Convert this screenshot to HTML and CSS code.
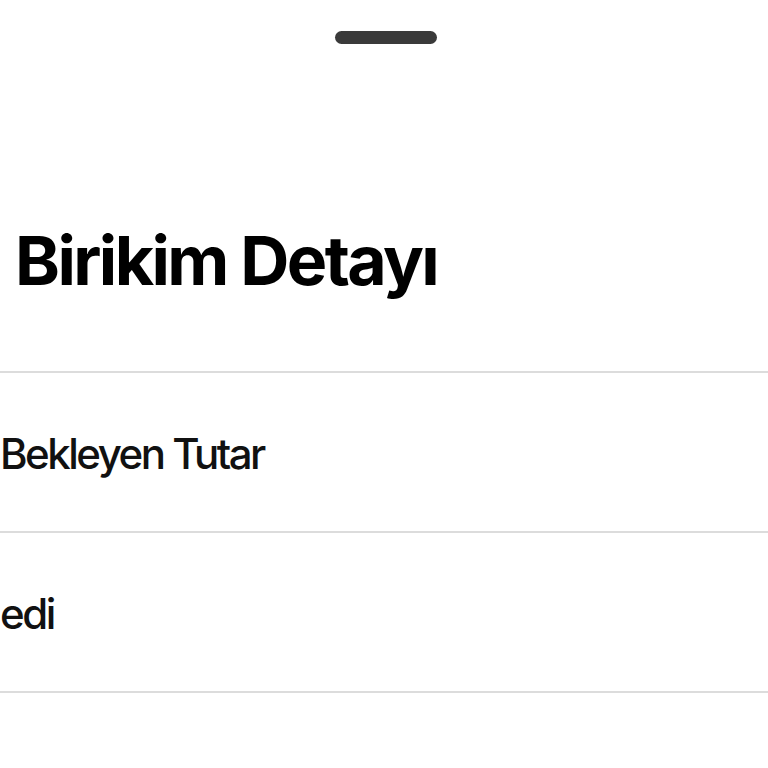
FILE: index.html
```html
<!DOCTYPE html>
<html lang="tr">
<head>
    <meta charset="UTF-8">
    <meta name="viewport" content="width=device-width, initial-scale=1.0">
    <title>Birikim Detayı</title>
    <link rel="stylesheet" href="styles.css">
</head>
<body>
    <div class="sheet">
        <div class="grabber-wrap">
            <div class="grabber"></div>
        </div>

        <div class="header">
            <h1>Birikim Detayı</h1>
        </div>

        <div class="list">
            <div class="row">
                <span class="row-label">Bekleyen Tutar</span>
            </div>
            <div class="row">
                <span class="row-label">edi</span>
            </div>
            <div class="row row-last"></div>
        </div>
    </div>
</body>
</html>
```

FILE: styles.css
```css
* {
    margin: 0;
    padding: 0;
    box-sizing: border-box;
}

html, body {
    height: 100%;
    overflow: hidden;
}

body {
    font-family: Inter, "Liberation Sans", sans-serif;
    background: #fff;
    color: #000;
}

.sheet {
    width: 768px;
    height: 100%;
    display: flex;
    flex-direction: column;
}

.grabber-wrap {
    display: flex;
    justify-content: center;
    padding-top: 31px;
    padding-left: 4px;
}

.grabber {
    width: 102px;
    height: 13px;
    border-radius: 7px;
    background: #3a3a3a;
}

.header {
    margin-top: 176px;
    padding-left: 15px;
    height: 151px;
}

.header h1 {
    font-size: 68px;
    line-height: 80px;
    font-weight: 700;
    letter-spacing: -2.6px;
}

.list {
    flex: 1;
    display: flex;
    flex-direction: column;
}

.row {
    height: 160px;
    border-top: 2px solid #dcdcdc;
    display: flex;
    align-items: center;
    padding-top: 3px;
}

.row-last {
    height: auto;
    flex: 1;
}

.row-label {
    font-size: 42px;
    line-height: 42px;
    color: #111;
    letter-spacing: -2.5px;
    font-weight: 450;
}
```
